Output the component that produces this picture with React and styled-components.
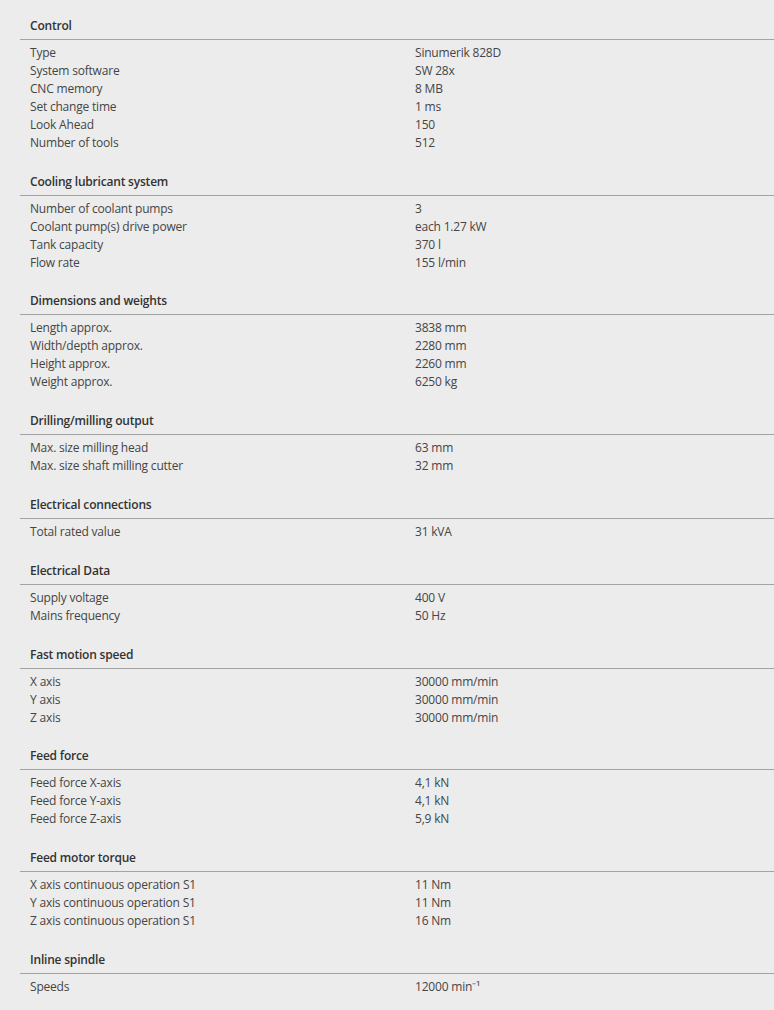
import React from "react";
import styled, { createGlobalStyle } from "styled-components";

const GlobalStyle = createGlobalStyle`
  html, body {
    margin: 0;
    padding: 0;
    background: #ececec;
  }
  body {
    font-family: "Open Sans", "Liberation Sans", sans-serif;
  }
`;

const Page = styled.div`
  width: 774px;
  min-height: 1010px;
  padding: 16.8px 0 0 20px;
  box-sizing: border-box;
  background: #ececec;
`;

const Section = styled.section`
  margin-bottom: 20.8px;
`;

const Heading = styled.h3`
  margin: 0;
  padding: 0 0 4px 10px;
  font-size: 12px;
  line-height: 18px;
  font-weight: 600;
  letter-spacing: -0.2px;
  color: #333;
  border-bottom: 1px solid #a3a3a3;
`;

const Rows = styled.div`
  padding-top: 4px;
`;

const Row = styled.div`
  display: grid;
  grid-template-columns: 395px 1fr;
  font-size: 12px;
  line-height: 18px;
  letter-spacing: -0.2px;
  color: #454545;
`;

const Label = styled.span`
  padding-left: 10px;
`;

const Value = styled.span``;

const specs = [
  {
    title: "Control",
    rows: [
      ["Type", "Sinumerik 828D"],
      ["System software", "SW 28x"],
      ["CNC memory", "8 MB"],
      ["Set change time", "1 ms"],
      ["Look Ahead", "150"],
      ["Number of tools", "512"],
    ],
  },
  {
    title: "Cooling lubricant system",
    rows: [
      ["Number of coolant pumps", "3"],
      ["Coolant pump(s) drive power", "each 1.27 kW"],
      ["Tank capacity", "370 l"],
      ["Flow rate", "155 l/min"],
    ],
  },
  {
    title: "Dimensions and weights",
    rows: [
      ["Length approx.", "3838 mm"],
      ["Width/depth approx.", "2280 mm"],
      ["Height approx.", "2260 mm"],
      ["Weight approx.", "6250 kg"],
    ],
  },
  {
    title: "Drilling/milling output",
    rows: [
      ["Max. size milling head", "63 mm"],
      ["Max. size shaft milling cutter", "32 mm"],
    ],
  },
  {
    title: "Electrical connections",
    rows: [["Total rated value", "31 kVA"]],
  },
  {
    title: "Electrical Data",
    rows: [
      ["Supply voltage", "400 V"],
      ["Mains frequency", "50 Hz"],
    ],
  },
  {
    title: "Fast motion speed",
    rows: [
      ["X axis", "30000 mm/min"],
      ["Y axis", "30000 mm/min"],
      ["Z axis", "30000 mm/min"],
    ],
  },
  {
    title: "Feed force",
    rows: [
      ["Feed force X-axis", "4,1 kN"],
      ["Feed force Y-axis", "4,1 kN"],
      ["Feed force Z-axis", "5,9 kN"],
    ],
  },
  {
    title: "Feed motor torque",
    rows: [
      ["X axis continuous operation S1", "11 Nm"],
      ["Y axis continuous operation S1", "11 Nm"],
      ["Z axis continuous operation S1", "16 Nm"],
    ],
  },
  {
    title: "Inline spindle",
    rows: [["Speeds", "12000 min⁻¹"]],
  },
];

export default function App() {
  return (
    <>
      <GlobalStyle />
      <Page>
        {specs.map((group) => (
          <Section key={group.title}>
            <Heading>{group.title}</Heading>
            <Rows>
              {group.rows.map(([label, value], i) => (
                <Row key={i}>
                  <Label>{label}</Label>
                  <Value>{value}</Value>
                </Row>
              ))}
            </Rows>
          </Section>
        ))}
      </Page>
    </>
  );
}
